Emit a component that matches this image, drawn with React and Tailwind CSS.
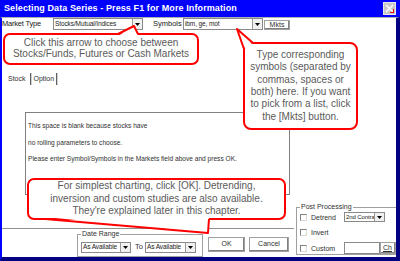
import React from "react"

const font = { fontFamily: '"Liberation Sans", Arial, sans-serif' }

const Arrow = () => (
  <div className="w-[10px] h-full border-l border-[#9a9a9a] bg-[#f0f0f0] flex items-center justify-center shrink-0">
    <svg width="5" height="3" viewBox="0 0 5 3">
      <path d="M0 0 L5 0 L2.5 3 Z" fill="#000" />
    </svg>
  </div>
)

const Select = ({ value, className = "", textClass = "text-[6.5px]" }) => (
  <div className={`flex items-stretch border border-[#8a8a8a] bg-white ${className}`}>
    <div className={`flex-1 leading-none pl-[1px] flex items-center text-[#202020] overflow-hidden whitespace-nowrap tracking-[-0.1px] ${textClass}`}>
      {value}
    </div>
    <Arrow />
  </div>
)

const Check = ({ label }) => (
  <div className="flex items-center h-[9px]">
    <div className="w-[7px] h-[7px] border border-[#808080] border-r-[#d8d8d8] border-b-[#d8d8d8] bg-white" />
    <span className="ml-[4px] text-[7px] leading-none text-[#303030]">{label}</span>
  </div>
)

const Button = ({ children, className = "" }) => (
  <div
    className={`flex items-center justify-center border border-[#a0a0a0] shadow-[inset_-1px_-1px_0_#808080,inset_1px_1px_0_#ffffff] bg-white text-[7px] text-[#303030] ${className}`}
  >
    {children}
  </div>
)

export default function App() {
  return (
    <div className="relative w-[400px] h-[261px] overflow-hidden bg-white flex flex-col" style={font}>
      {/* title bar */}
      <div className="h-[17px] bg-[#0000ff] flex items-center justify-between pl-[4px] pr-[4px] shrink-0">
        <span className="text-white font-bold text-[9px] leading-none tracking-[0.1px]">
          Selecting Data Series - Press F1 for More Information
        </span>
        <div className="relative w-[13px] h-[13px] bg-[#c8c8c8] border border-[#e8e8e8] flex items-center justify-center">
          <svg width="9" height="9" viewBox="0 0 9 9">
            <path d="M1 1 L8 8 M8 1 L1 8" stroke="#fff" strokeWidth="1.4" />
          </svg>
          <div className="absolute right-[1px] bottom-[1px] w-[4px] h-[4px] border-r border-b border-[#e00000]" />
        </div>
      </div>

      {/* body */}
      <div className="flex-1 flex flex-col border-t border-[#b0b0b0] border-l-2 border-l-[#0000ff] border-r-4 border-r-[#000080] border-b-4 border-b-[#000080]">
        {/* market row */}
        <div className="flex items-start h-[12px] shrink-0">
          <span className="w-[51px] text-[7.5px] leading-none pt-[2px] text-[#202020] tracking-[-0.2px]">Market Type</span>
          <Select value="Stocks/Mutual/Indices" className="w-[90px] h-[12px]" />
          <span className="ml-[10px] w-[30px] text-[7.5px] leading-none pt-[2px] text-[#202020]">Symbols</span>
          <Select value="ibm, ge, mot" className="w-[80px] h-[12px]" />
          <Button className="ml-[1px] mt-[2px] w-[26px] h-[10px]">Mkts</Button>
        </div>

        <div className="flex-1 flex">
          {/* left column */}
          <div className="w-[292px] flex flex-col">
            <div className="mt-[42px] h-[14px] flex items-center pl-[5px] text-[7px] text-[#303030]">
              <span className="pl-[1px] pr-[4px]">Stock</span>
              <div className="w-[2px] h-[12px] border-l border-[#606060] border-r border-r-[#d0d0d0]" />
              <span className="px-[2px]">Option</span>
              <div className="w-[2px] h-[12px] border-l border-[#606060] border-r border-r-[#d0d0d0]" />
            </div>
            <div className="mt-[26px] ml-[23px] w-[265px] h-[83px] border border-[#808080] pl-[2px] pt-[10px] text-[6.6px] leading-none text-[#303030] flex flex-col gap-[10px]">
              <span>This space is blank because stocks have</span>
              <span>no rolling parameters to choose.</span>
              <span>Please enter Symbol/Symbols in the Markets field above and press OK.</span>
            </div>
            <div className="mt-[33px] h-[2px] border-t border-[#909090] border-b border-b-white" />
            <div className="mt-[3px] flex items-start">
              <div className="relative ml-[75px] mt-[1px] w-[126px] h-[23px] border border-[#a0a0a0] flex items-center pl-[3px] pt-[3px]">
                <span className="absolute -top-[5px] left-[3px] bg-white px-[1px] text-[7px] leading-none text-[#303030]">
                  Date Range
                </span>
                <Select value="As Available" className="w-[50px] h-[11px]" />
                <span className="ml-[4px] text-[7.5px] text-[#303030]">To</span>
                <Select value="As Available" className="ml-[2px] w-[51px] h-[11px]" />
              </div>
              <Button className="ml-[5px] mt-[4px] w-[37px] h-[15px]">OK</Button>
              <Button className="ml-[4px] mt-[4px] w-[40px] h-[15px]">Cancel</Button>
            </div>
          </div>

          {/* right column */}
          <div className="flex-1 flex flex-col justify-end pb-[2px]">
            <div className="relative ml-[2px] h-[48px] border border-[#a0a0a0] border-r-0 pl-[3px] pt-[4px] flex flex-col gap-[6px]">
              <span className="absolute -top-[5px] left-[3px] bg-white px-[1px] text-[7px] leading-none text-[#303030]">
                Post Processing
              </span>
              <div className="flex items-center">
                <div className="w-[44px]">
                  <Check label="Detrend" />
                </div>
                <Select value="2nd Contra" className="w-[41px] h-[10px]" textClass="text-[6px]" />
              </div>
              <Check label="Invert" />
              <div className="flex items-center">
                <div className="w-[44px]">
                  <Check label="Custom" />
                </div>
                <div className="w-[36px] h-[12px] border border-[#8a8a8a] bg-white" />
                <Button className="w-[16px] h-[12px] justify-start pl-[2px]">
                  <span className="underline">Ch</span>
                </Button>
              </div>
            </div>
          </div>
        </div>
      </div>

      {/* callouts */}
      <div className="absolute left-[3px] top-[33px] w-[196px] h-[32px] border-2 border-[#ff0000] rounded-[7px] bg-white flex flex-col items-center justify-center pb-[1px] text-[10px] leading-[10.5px] text-[#5a5a5a] whitespace-nowrap">
        <span>Click this arrow to choose between</span>
        <span>Stocks/Funds, Futures or Cash Markets</span>
      </div>
      <div className="absolute left-[243px] top-[42px] w-[115px] h-[88px] border-2 border-[#ff0000] rounded-[8px] bg-white flex flex-col items-center justify-center text-[10px] leading-[12.4px] text-[#5a5a5a] whitespace-nowrap">
        <span>Type corresponding</span>
        <span>symbols (separated by</span>
        <span>commas, spaces or</span>
        <span>both) here. If you want</span>
        <span>to pick from a list, click</span>
        <span>the [Mkts] button.</span>
      </div>
      <div className="absolute left-[27px] top-[178px] w-[259px] h-[42px] border-2 border-[#ff0000] rounded-[7px] bg-white flex flex-col items-center justify-center text-[10px] leading-[12.5px] text-[#5a5a5a] whitespace-nowrap">
        <span>For simplest charting, click [OK]. Detrending,</span>
        <span>inversion and custom studies are also available.</span>
        <span>They're explained later in this chapter.</span>
      </div>

      {/* callout pointers */}
      <svg className="absolute left-0 top-0 pointer-events-none" width="400" height="261" viewBox="0 0 400 261">
        <polygon points="118,36 134,26 138,36" fill="#fff" />
        <polyline points="118,34 134,26 138,34" fill="none" stroke="#ff0000" strokeWidth="2" strokeLinejoin="round" />
        <polygon points="245,49 237,29 253,45" fill="#fff" />
        <polyline points="244,49 237,29 253,43" fill="none" stroke="#ff0000" strokeWidth="2" strokeLinejoin="round" />
        <polygon points="45,217 208,233 209,217" fill="#fff" />
        <polyline points="45,219 208,233 209,219" fill="none" stroke="#ff0000" strokeWidth="2" strokeLinejoin="round" />
      </svg>
    </div>
  )
}
